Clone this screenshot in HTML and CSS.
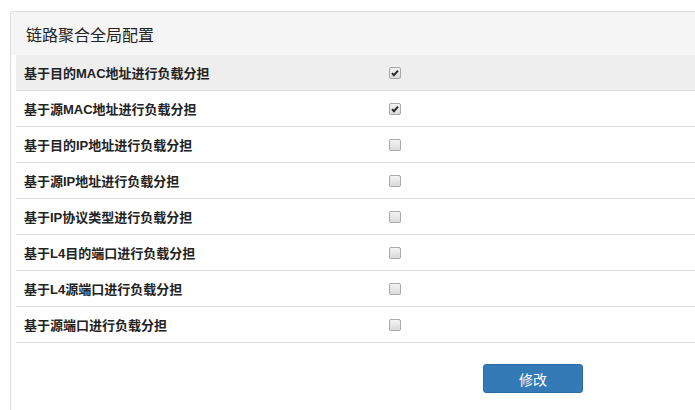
FILE: index.html
```html
<!DOCTYPE html>
<html lang="zh">
<head>
<meta charset="utf-8">
<link rel="stylesheet" href="styles.css">
</head>
<body>
<div class="panel">
  <div class="panel-heading">链路聚合全局配置</div>
  <div class="panel-body">
    <table class="cfg">
      <tr class="active"><td class="lbl">基于目的MAC地址进行负载分担</td><td><span class="cb on"><svg viewBox="0 0 12 12"><path d="M2.4 6.2 L4.7 8.6 L9.6 3.2" /></svg></span></td></tr>
      <tr><td class="lbl">基于源MAC地址进行负载分担</td><td><span class="cb on"><svg viewBox="0 0 12 12"><path d="M2.4 6.2 L4.7 8.6 L9.6 3.2" /></svg></span></td></tr>
      <tr><td class="lbl">基于目的IP地址进行负载分担</td><td><span class="cb"></span></td></tr>
      <tr><td class="lbl">基于源IP地址进行负载分担</td><td><span class="cb"></span></td></tr>
      <tr><td class="lbl">基于IP协议类型进行负载分担</td><td><span class="cb"></span></td></tr>
      <tr><td class="lbl">基于L4目的端口进行负载分担</td><td><span class="cb"></span></td></tr>
      <tr><td class="lbl">基于L4源端口进行负载分担</td><td><span class="cb"></span></td></tr>
      <tr><td class="lbl">基于源端口进行负载分担</td><td><span class="cb"></span></td></tr>
    </table>
    <div class="actions"><button class="btn">修改</button></div>
  </div>
</div>
</body>
</html>
```
FILE: styles.css
```css
html, body {
  margin: 0;
  padding: 0;
  background: #fff;
  overflow: hidden;
}
body {
  width: 695px;
  height: 410px;
  box-sizing: border-box;
  padding: 11px 0 0 10px;
  font-family: "Liberation Sans", "Noto Sans CJK SC", sans-serif;
  color: #222;
}
.panel {
  width: 685px;
  height: 399px;
  border: 1px solid #dcdcdc;
  border-right: none;
  border-bottom: none;
  border-radius: 4px 0 0 0;
  box-sizing: border-box;
}
.panel-heading {
  background: #f5f5f5;
  height: 43px;
  box-sizing: border-box;
  padding: 0 15px;
  display: flex;
  align-items: center;
  font-size: 16px;
  color: #222;
  border-radius: 4px 0 0 0;
}
.panel-body {
  padding: 0 0 0 5px;
}
.cfg {
  border-collapse: collapse;
  width: 679px;
}
.cfg td {
  height: 35px;
  padding: 0 8px;
  border-bottom: 1px solid #dcdcdc;
  vertical-align: middle;
}
.cfg tr.active td {
  background: #eeeeee;
}
.cfg td.lbl {
  width: 349px;
  font-size: 13px;
  font-weight: bold;
  color: #222;
}
.cb {
  display: block;
  width: 12px;
  height: 12px;
  box-sizing: border-box;
  border: 1px solid #a9a9a9;
  border-radius: 2px;
  background: linear-gradient(#f4f4f4, #dadada);
}
.cb svg {
  display: block;
  width: 10px;
  height: 10px;
}
.cb path {
  fill: none;
  stroke: #2a2a2a;
  stroke-width: 2.4;
}
.actions {
  padding: 21px 0 0 467px;
}
.btn {
  width: 100px;
  height: 29px;
  background: #337ab7;
  border: 1px solid #2e6da4;
  border-radius: 3px;
  color: #fff;
  font-family: "Liberation Sans", "Noto Sans CJK SC", sans-serif;
  font-size: 14px;
  padding: 0;
}
```
